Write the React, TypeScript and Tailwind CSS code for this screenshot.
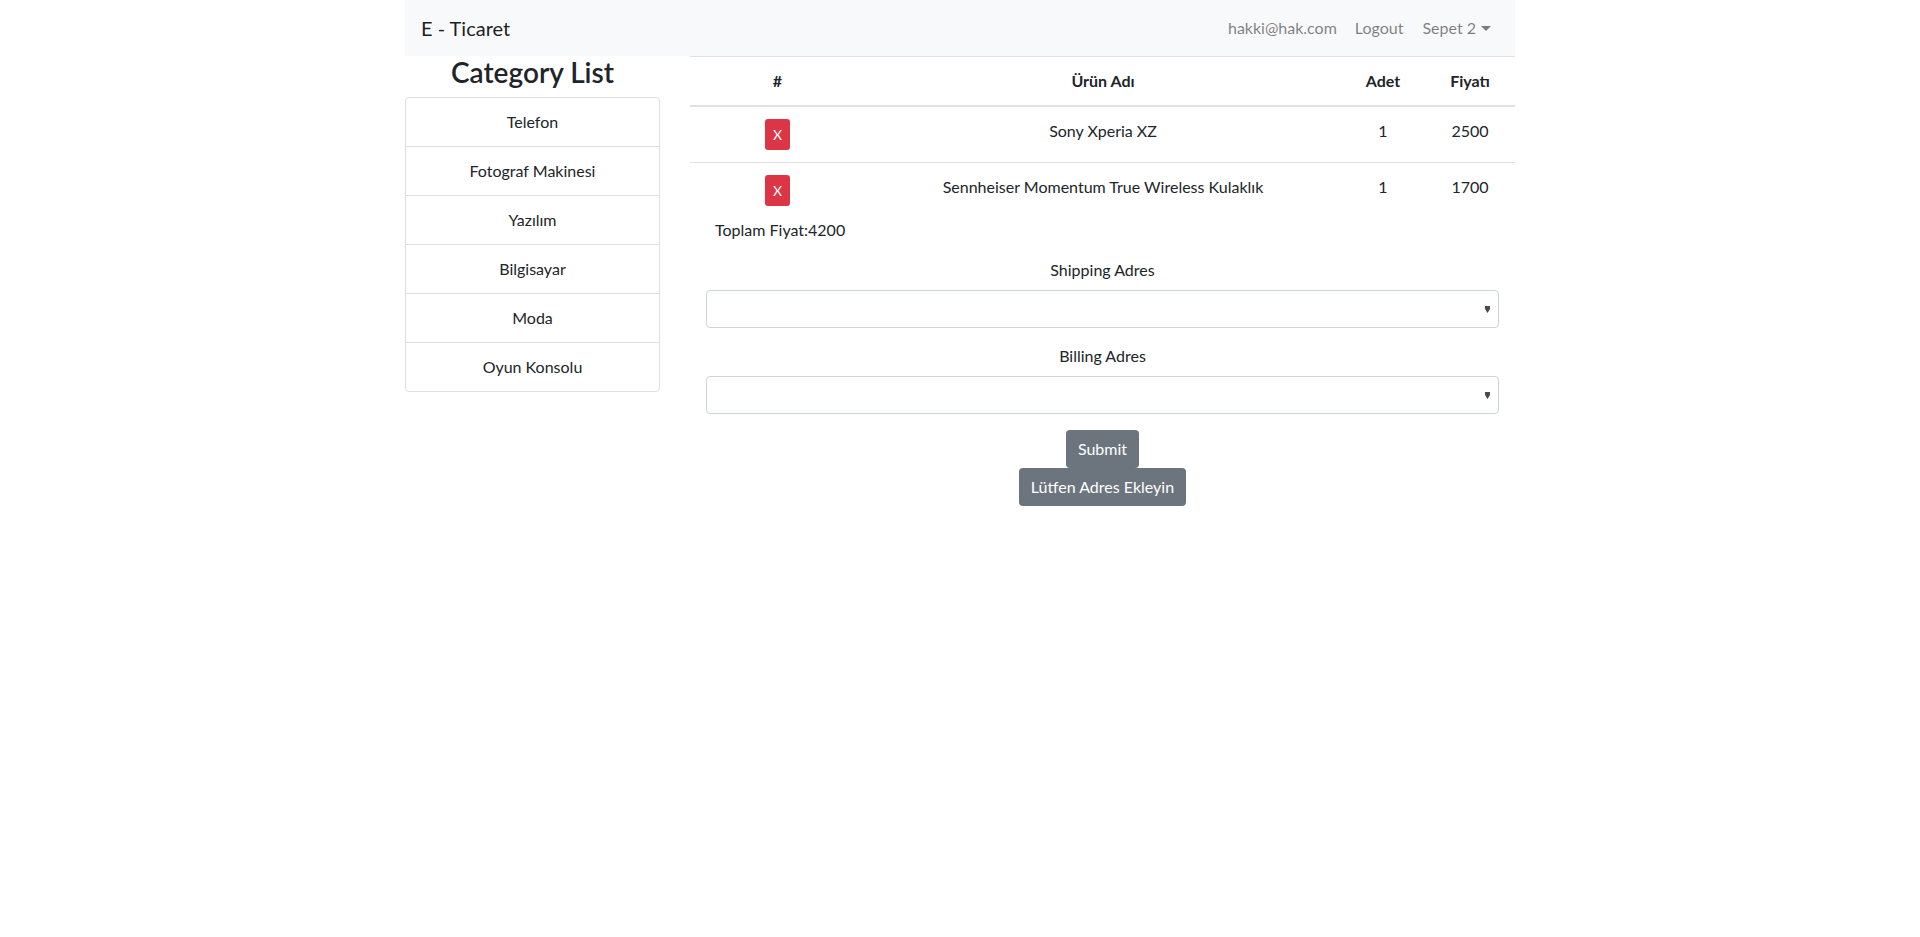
import React from "react";

const categories = ["Telefon", "Fotograf Makinesi", "Yazılım", "Bilgisayar", "Moda", "Oyun Konsolu"];

const items = [
  { name: "Sony Xperia XZ", qty: 1, price: 2500 },
  { name: "Sennheiser Momentum True Wireless Kulaklık", qty: 1, price: 1700 },
];

function SelectBox() {
  return (
    <div className="relative h-[38px] w-full rounded-[4px] border border-[#ced4da] bg-white">
      <svg className="absolute right-[8px] top-[15px]" width="5" height="7" viewBox="0 0 5 7">
        <path d="M0 0H5V3L2.5 7L0 3Z" fill="#4a4a4a" />
      </svg>
    </div>
  );
}

export default function App() {
  return (
    <div className="min-h-[937px] bg-white text-[16px] leading-6 text-[#212529] [font-family:Lato,'Noto_Sans',sans-serif]">
      <div className="mx-auto w-[1110px]">
        <nav className="flex h-14 items-center justify-between bg-[#f8f9fa] px-4">
          <span className="text-[20px] leading-[30px] text-black/90">E - Ticaret</span>
          <div className="flex items-center text-black/50">
            <span className="px-2 py-2">hakki@hak.com</span>
            <span className="ml-[2px] px-2 py-2">Logout</span>
            <span className="ml-[3px] flex items-center px-2 py-2">
              Sepet 2
              <span className="ml-[5px] mt-[1px] h-0 w-0 border-x-[5px] border-t-[5px] border-x-transparent border-t-black/50" />
            </span>
          </div>
        </nav>

        <div className="flex">
          <div className="mr-[30px] w-[255px] shrink-0">
            <h3 className="mb-2 text-center text-[28px] font-semibold leading-[33px] text-[#212529]">Category List</h3>
            <ul className="overflow-hidden rounded-[4px] border border-black/[0.125]">
              {categories.map((c, i) => (
                <li
                  key={c}
                  className={`px-5 py-3 text-center leading-6 ${i > 0 ? "border-t border-black/[0.125]" : ""}`}
                >
                  {c}
                </li>
              ))}
            </ul>
          </div>

          <div className="min-w-0 flex-1">
            <table className="w-full border-collapse text-center">
              <thead>
                <tr>
                  <th className="w-[175px] border-t border-b-2 border-[#dee2e6] p-3 font-bold">#</th>
                  <th className="w-[476px] border-t border-b-2 border-[#dee2e6] p-3 font-bold">Ürün Adı</th>
                  <th className="w-[84px] border-t border-b-2 border-[#dee2e6] p-3 font-bold">Adet</th>
                  <th className="border-t border-b-2 border-[#dee2e6] p-3 font-bold">Fiyatı</th>
                </tr>
              </thead>
              <tbody>
                {items.map((it) => (
                  <tr key={it.name}>
                    <td className="h-[55px] border-t border-[#dee2e6] px-3 pt-3 pb-3 align-top">
                      <button className="inline-flex h-[31px] items-center rounded-[3px] bg-[#dc3545] px-2 text-[14px] leading-[21px] text-white">
                        X
                      </button>
                    </td>
                    <td className="border-t border-[#dee2e6] p-3 align-top">{it.name}</td>
                    <td className="border-t border-[#dee2e6] p-3 align-top">{it.qty}</td>
                    <td className="border-t border-[#dee2e6] p-3 align-top">{it.price}</td>
                  </tr>
                ))}
              </tbody>
            </table>

            <div className="pl-[25px] leading-6">Toplam Fiyat:4200</div>

            <div className="mx-4 mt-4">
              <div className="mb-2 text-center">Shipping Adres</div>
              <SelectBox />
              <div className="mb-2 mt-4 text-center">Billing Adres</div>
              <SelectBox />
              <div className="mt-4 flex flex-col items-center">
                <button className="h-[38px] rounded-[4px] bg-[#6c757d] px-3 leading-6 text-white">Submit</button>
                <button className="h-[38px] rounded-[4px] bg-[#6c757d] px-3 leading-6 text-white">Lütfen Adres Ekleyin</button>
              </div>
            </div>
          </div>
        </div>
      </div>
    </div>
  );
}
